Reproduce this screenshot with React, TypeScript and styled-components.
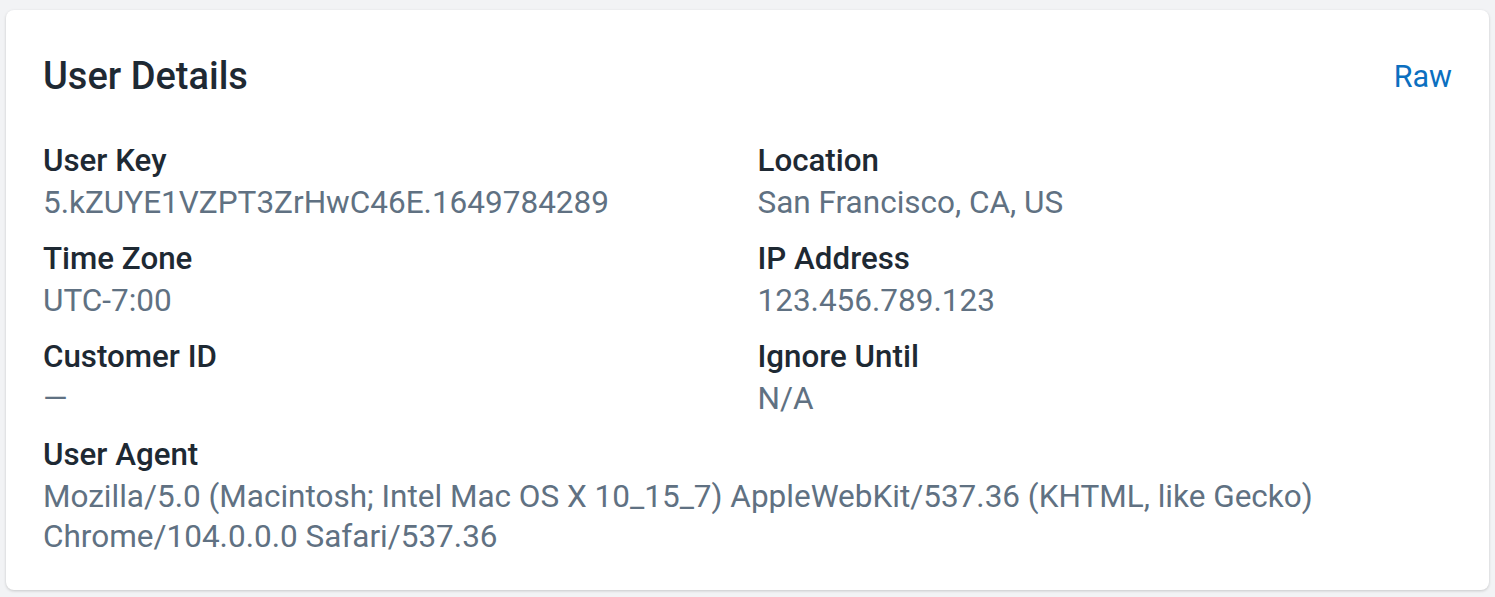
import React from "react";
import styled, { createGlobalStyle } from "styled-components";

const Global = createGlobalStyle`
  html, body { margin: 0; padding: 0; background: #f2f3f5; }
  body { font-family: Roboto, "Liberation Sans", sans-serif; }
  * { box-sizing: border-box; }
`;

const Page = styled.div`
  padding: 10px 6px 6px 6px;
`;

const Card = styled.section`
  background: #ffffff;
  border-radius: 8px;
  box-shadow: 0 1px 3px rgba(0, 0, 0, 0.18);
  padding: 22px 37px 33px 37px;
`;

const Header = styled.div`
  display: flex;
  justify-content: space-between;
  align-items: center;
  margin-bottom: 22px;
`;

const Title = styled.h2`
  margin: 0;
  font-size: 38px;
  font-weight: 500;
  color: #1e2933;
  line-height: 88px;
`;

const RawLink = styled.a`
  font-size: 30.5px;
  color: #0b6fc0;
  text-decoration: none;
  cursor: pointer;
`;

const Grid = styled.dl`
  margin: 0;
  display: grid;
  grid-template-columns: 1fr 1fr;
  column-gap: 20px;
  row-gap: 17px;
`;

const Field = styled.div<{ $wide?: boolean }>`
  grid-column: ${(p) => (p.$wide ? "1 / -1" : "auto")};
`;

const Label = styled.dt`
  font-size: 31.3px;
  font-weight: 500;
  color: #1e2933;
  line-height: 38px;
`;

const Value = styled.dd`
  margin: 3px 0 0 0;
  font-size: 31.5px;
  font-weight: 400;
  color: #607182;
  line-height: 40px;
`;

const fields: { label: string; value: string; wide?: boolean }[] = [
  { label: "User Key", value: "5.kZUYE1VZPT3ZrHwC46E.1649784289" },
  { label: "Location", value: "San Francisco, CA, US" },
  { label: "Time Zone", value: "UTC-7:00" },
  { label: "IP Address", value: "123.456.789.123" },
  { label: "Customer ID", value: "—" },
  { label: "Ignore Until", value: "N/A" },
  {
    label: "User Agent",
    value:
      "Mozilla/5.0 (Macintosh; Intel Mac OS X 10_15_7) AppleWebKit/537.36 (KHTML, like Gecko) Chrome/104.0.0.0 Safari/537.36",
    wide: true,
  },
];

export default function App() {
  return (
    <Page>
      <Global />
      <Card>
        <Header>
          <Title>User Details</Title>
          <RawLink>Raw</RawLink>
        </Header>
        <Grid>
          {fields.map((f) => (
            <Field key={f.label} $wide={f.wide}>
              <Label>{f.label}</Label>
              <Value>{f.value}</Value>
            </Field>
          ))}
        </Grid>
      </Card>
    </Page>
  );
}
